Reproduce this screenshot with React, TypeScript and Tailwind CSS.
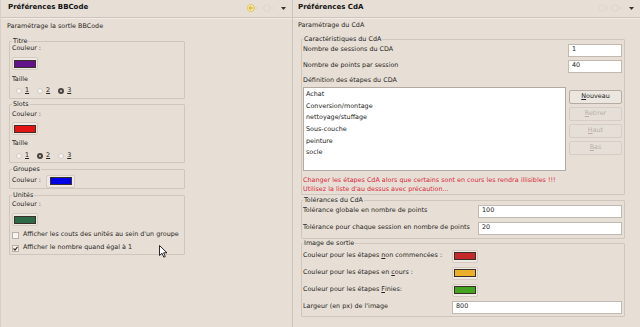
import React from "react";

const font = "font-['DejaVu_Sans',sans-serif]";

function Swatch({ color, w = 26 }: { color: string; w?: number }) {
  return (
    <div
      className="h-[13px] rounded-[2px] border border-[#d6c9c0] bg-[#efe9e3] flex items-center justify-center shrink-0"
      style={{ width: w }}
    >
      <div className="w-[22px] h-[8px] border border-[#3b2f2a]" style={{ background: color }} />
    </div>
  );
}

function Radio({ checked, label }: { checked?: boolean; label: string }) {
  return (
    <div className="flex items-center gap-[3px]">
      <div
        className={
          "w-[6px] h-[6px] rounded-full " +
          (checked ? "border-[2px] border-[#4a4440] bg-[#d8d2cc]" : "border border-[#d2cbc4] bg-[#f7f4f1]")
        }
      />
      <span className="underline">{label}</span>
    </div>
  );
}

function Check({ checked }: { checked?: boolean }) {
  return (
    <div className="w-[7px] h-[7px] border border-[#b9b0a7] bg-[#f7f4f1] flex items-center justify-center shrink-0">
      {checked && (
        <svg width="5" height="5" viewBox="0 0 5 5">
          <path d="M0.5 2.5 L2 4 L4.5 0.8" stroke="#3a3330" strokeWidth="1.2" fill="none" />
        </svg>
      )}
    </div>
  );
}

function Input({ value, className = "" }: { value: string; className?: string }) {
  return (
    <div className={"h-[13px] bg-white border border-[#c2b9b0] flex items-center px-[3px] text-[#222] " + className}>
      {value}
    </div>
  );
}

function Btn({ label, u, enabled }: { label: string; u: number; enabled?: boolean }) {
  return (
    <div
      className={
        "h-[14px] w-[53px] rounded-[2px] border flex items-center justify-center " +
        (enabled ? "border-[#b5aca3] bg-[#ece6e0] text-[#222]" : "border-[#d6cec6] bg-[#e6dfd7] text-[#b8afa6]")
      }
    >
      <span>
        {label.slice(0, u)}
        <span className="underline">{label[u]}</span>
        {label.slice(u + 1)}
      </span>
    </div>
  );
}

function Group({ title, className = "", children }: { title: string; className?: string; children: React.ReactNode }) {
  return (
    <fieldset className={"border border-[#cfc6bd] rounded-[1px] " + className}>
      <legend className="leading-[6px] px-[1px] text-[#222]">{title}</legend>
      {children}
    </fieldset>
  );
}

function Header({ title, left }: { title: string; left?: boolean }) {
  return (
    <div className="h-[18px] flex items-start justify-between border-b border-[#cdc4bb] shadow-[0_1px_0_#f1ece7]">
      <div className={"pt-[3px] leading-[8px] font-bold text-[7px] text-[#111] " + (left ? "pl-[7px]" : "pl-[5px]")}>
        {title}
      </div>
      <div className="flex items-center gap-[3px] pt-[3px] pr-[5px]">
        {left ? (
          <>
            <svg width="12" height="10" viewBox="0 0 12 10">
              <circle cx="5" cy="5" r="3.6" fill="#f4e7a0" stroke="#d8c45c" strokeWidth="0.8" />
              <path d="M3 5 H7.5 M3 5 L5 3.2 M3 5 L5 6.8" stroke="#c9a832" strokeWidth="0.9" fill="none" />
              <path d="M9.5 5 H11" stroke="#c8bfb6" strokeWidth="0.8" />
            </svg>
            <svg width="16" height="10" viewBox="0 0 16 10">
              <circle cx="6" cy="5" r="3.4" fill="none" stroke="#ddd5cd" strokeWidth="0.8" />
              <path d="M11.5 5 H13" stroke="#d5cdc5" strokeWidth="0.8" />
            </svg>
          </>
        ) : (
          <svg width="28" height="10" viewBox="0 0 28 10">
            <circle cx="5" cy="5" r="3.4" fill="none" stroke="#ddd5cd" strokeWidth="0.8" />
            <path d="M9.5 5 H11" stroke="#d5cdc5" strokeWidth="0.8" />
            <circle cx="18" cy="5" r="3.4" fill="none" stroke="#ddd5cd" strokeWidth="0.8" />
            <path d="M23 5 H25" stroke="#d5cdc5" strokeWidth="0.8" />
          </svg>
        )}
        <svg width="7" height="8" viewBox="0 0 7 8">
          <path d="M1 3 L6 3 L3.5 6 Z" fill="#3a3330" />
        </svg>
      </div>
    </div>
  );
}

function LeftPanel() {
  return (
    <div className="w-[292px] shrink-0 flex flex-col border-l border-[#d9d0c7] relative">
      <Header title="Préférences BBCode" left />
      <div className="pl-[6px] mt-[3px] leading-[10px]">Paramétrage la sortle BBCode</div>
      <div className="pl-[8px] w-[184px] flex flex-col mt-[7px]">
        <Group title="Titre" className="pl-[2px] pb-[3px]">
          <div className="leading-[8px]">Couleur :</div>
          <div className="mt-[5px]">
            <Swatch color="#62128a" />
          </div>
          <div className="leading-[8px] mt-[5px]">Taille</div>
          <div className="flex items-center gap-[8px] pl-[4px] mt-[3px] h-[9px]">
            <Radio label="1" />
            <Radio label="2" />
            <Radio label="3" checked />
          </div>
        </Group>
        <Group title="Slots" className="pl-[2px] pb-[2px] mt-[2px]">
          <div className="leading-[8px] mt-[3px]">Couleur :</div>
          <div className="mt-[4px]">
            <Swatch color="#e41414" />
          </div>
          <div className="leading-[8px] mt-[4px]">Taille</div>
          <div className="flex items-center gap-[8px] pl-[4px] mt-[4px] h-[9px]">
            <Radio label="1" />
            <Radio label="2" checked />
            <Radio label="3" />
          </div>
        </Group>
        <Group title="Groupes" className="pl-[2px] mt-[3px]">
          <div className="flex items-center gap-[5px] mt-[2px] h-[14px]">
            <span>Couleur :</span>
            <Swatch color="#0000e6" w={29} />
          </div>
        </Group>
        <Group title="Unités" className="pl-[2px] pb-[1px] mt-[3px]">
          <div className="leading-[8px] mt-[2px]">Couleur :</div>
          <div className="mt-[5px]">
            <Swatch color="#2e6a48" />
          </div>
          <div className="flex items-center gap-[4px] mt-[4px] h-[10px]">
            <Check />
            <span className="whitespace-nowrap">Afficher les couts des unités au sein d'un groupe</span>
          </div>
          <div className="flex items-center gap-[4px] mt-[3px] h-[10px]">
            <Check checked />
            <span>Afficher le nombre quand égal à 1</span>
          </div>
        </Group>
      </div>
      <svg className="absolute left-[158px] top-[245px]" width="9" height="13" viewBox="0 0 9 13">
        <path d="M0.5 0.5 L0.5 10.5 L3 8.3 L4.8 12.2 L6.3 11.5 L4.6 7.8 L8 7.8 Z" fill="#fff" stroke="#111" strokeWidth="0.9" />
      </svg>
    </div>
  );
}

function RightPanel() {
  const items = ["Achat", "Conversion/montage", "nettoyage/stuffage", "Sous-couche", "peinture", "socle"];
  return (
    <div className="flex-1 flex flex-col border-l border-[#cdc4bb]">
      <Header title="Préférences CdA" />
      <div className="pl-[5px] mt-[2px] leading-[10px]">Paramétrage du CdA</div>
      <div className="pl-[8px] pr-[15px] flex flex-col mt-[6px]">
        <Group title="Caractéristiques du CdA" className="pl-[1px] pr-[2px]">
          <div className="flex items-center justify-between h-[14px] mt-[1px]">
            <span>Nombre de sessions du CDA</span>
            <Input value="1" className="w-[54px]" />
          </div>
          <div className="flex items-center justify-between h-[14px] mt-[2px]">
            <span>Nombre de points par session</span>
            <Input value="40" className="w-[54px]" />
          </div>
          <div className="leading-[10px] mt-[2px]">Définition des étapes du CDA</div>
          <div className="flex justify-between mt-[2px]">
            <div className="w-[263px] h-[84px] bg-white border border-[#b3aaa1] pt-[1px] pl-[2px]">
              {items.map((t) => (
                <div key={t} className="h-[11.7px] leading-[11.7px] text-[#222]">
                  {t}
                </div>
              ))}
            </div>
            <div className="flex flex-col gap-[3px] pt-[3px]">
              <Btn label="Nouveau" u={0} enabled />
              <Btn label="Retirer" u={0} />
              <Btn label="Haut" u={0} />
              <Btn label="Bas" u={0} />
            </div>
          </div>
          <div className="text-[#d9283a] leading-[8.5px] mt-[5px] pb-[1px]">
            <div>Changer les étapes CdA alors que certains sont en cours les rendra illisibles !!!</div>
            <div>Utilisez la liste d'au dessus avec précaution...</div>
          </div>
        </Group>
        <Group title="Tolérances du CdA" className="pl-[1px] pr-[2px] pb-[3px] mt-[2px]">
          <div className="flex items-center justify-between h-[14px] mt-[1px]">
            <span>Tolérance globale en nombre de points</span>
            <Input value="100" className="w-[144px]" />
          </div>
          <div className="flex items-center justify-between h-[14px] mt-[3px]">
            <span>Tolérance pour chaque session en nombre de points</span>
            <Input value="20" className="w-[144px]" />
          </div>
        </Group>
        <Group title="Image de sortie" className="pl-[1px] pr-[2px] pb-[2px] mt-[1px]">
          <div className="grid grid-cols-[149px_1fr] items-center gap-y-[3px] mt-[3px]">
            <div className="h-[14px] flex items-center">
              Couleur pour les étapes <span className="underline ml-[2px]">n</span>on commencées :
            </div>
            <Swatch color="#c42a2a" />
            <div className="h-[14px] flex items-center">
              Couleur pour les étapes en <span className="underline ml-[2px]">c</span>ours :
            </div>
            <Swatch color="#eab02c" />
            <div className="h-[14px] flex items-center">
              Couleur pour les étapes <span className="underline ml-[2px]">F</span>inies:
            </div>
            <Swatch color="#44a422" />
            <div className="h-[14px] flex items-center">Largeur (en px) de l'image</div>
            <Input value="800" />
          </div>
        </Group>
      </div>
    </div>
  );
}

export default function App() {
  return (
    <div className={"w-[640px] h-[327px] overflow-hidden bg-[#e7dfd6] text-[6.4px] text-[#2a2522] flex " + font}>
      <LeftPanel />
      <RightPanel />
    </div>
  );
}
